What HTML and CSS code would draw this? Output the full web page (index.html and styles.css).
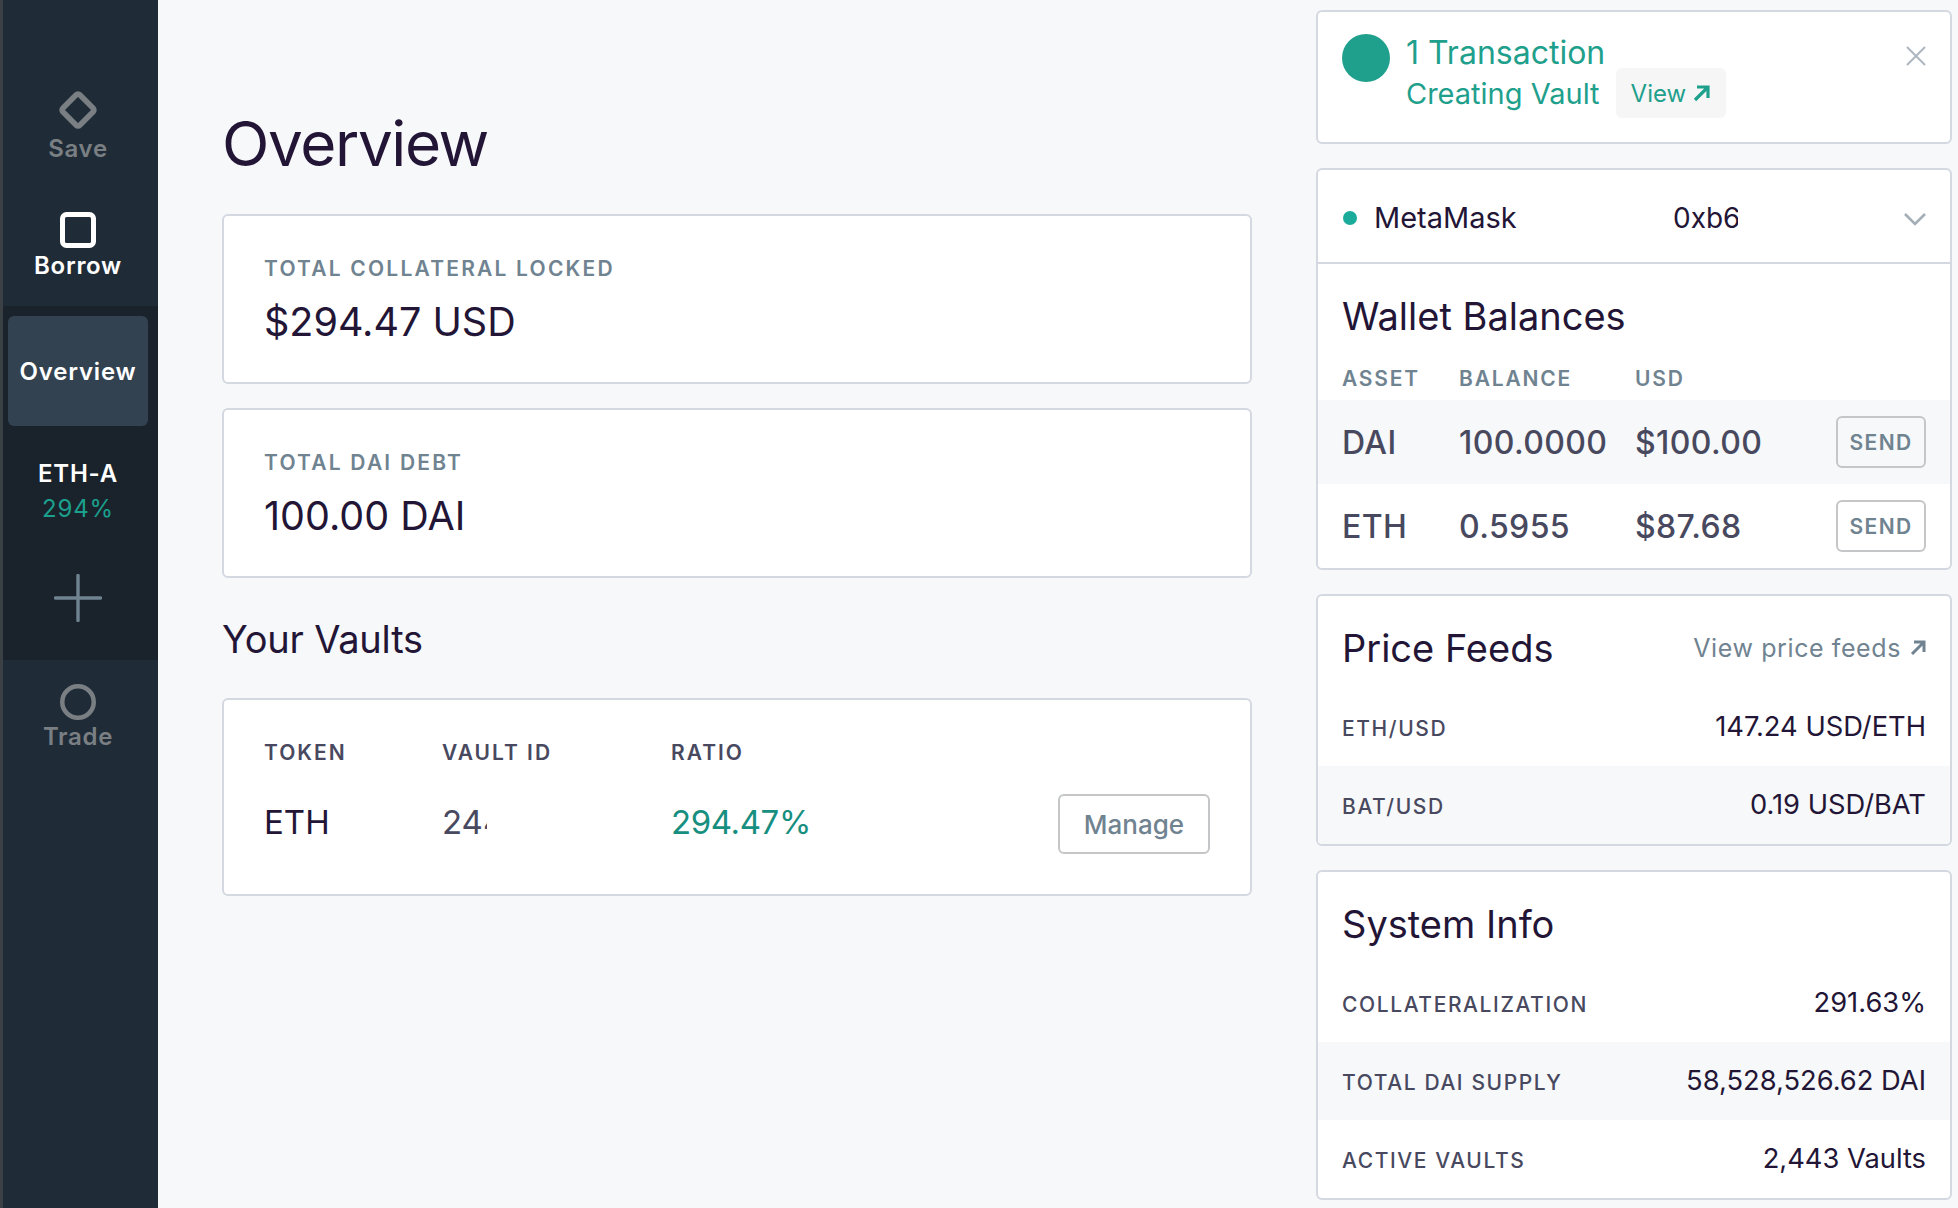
FILE: index.html
```html
<!DOCTYPE html>
<html lang="en">
<head>
  <meta charset="UTF-8">
  <title>Overview</title>
  <link rel="stylesheet" href="styles.css">
</head>
<body>
  <nav class="sidebar">
    <a class="nav-item nav-muted nav-save">
      <svg class="nav-icon" width="40" height="40" viewBox="0 0 40 40"><rect x="8" y="8" width="24" height="24" rx="2.5" transform="rotate(45 20 20)" fill="none" stroke="currentColor" stroke-width="5.5"/></svg>
      <span>Save</span>
    </a>
    <a class="nav-item nav-borrow">
      <svg class="nav-icon" width="36" height="36" viewBox="0 0 36 36"><rect x="2.5" y="2.5" width="31" height="31" rx="4" fill="none" stroke="currentColor" stroke-width="5"/></svg>
      <span>Borrow</span>
    </a>
    <div class="nav-group">
      <a class="nav-active">Overview</a>
      <a class="nav-vault">
        <span>ETH-A</span>
        <span class="nav-ratio">294%</span>
      </a>
      <svg class="nav-plus" width="48" height="48" viewBox="0 0 48 48"><path d="M24 1.5v45M1.5 24h45" fill="none" stroke="#708390" stroke-width="3.4" stroke-linecap="round"/></svg>
    </div>
    <a class="nav-item nav-muted nav-trade">
      <svg class="nav-icon" width="36" height="36" viewBox="0 0 36 36"><circle cx="18" cy="18" r="15.75" fill="none" stroke="currentColor" stroke-width="4.5"/></svg>
      <span>Trade</span>
    </a>
  </nav>

  <main class="content">
    <h1>Overview</h1>
    <section class="card stat-card">
      <div class="stat-label">TOTAL COLLATERAL LOCKED</div>
      <div class="stat-value">$294.47 USD</div>
    </section>
    <section class="card stat-card">
      <div class="stat-label">TOTAL DAI DEBT</div>
      <div class="stat-value">100.00 DAI</div>
    </section>
    <h2 class="vaults-title">Your Vaults</h2>
    <section class="card vault-card">
      <div class="vault-row vault-head">
        <span>TOKEN</span>
        <span>VAULT ID</span>
        <span>RATIO</span>
      </div>
      <div class="vault-row vault-data">
        <span class="vault-token">ETH</span>
        <span class="vault-id">2443</span>
        <span class="vault-ratio">294.47%</span>
        <button class="manage-btn">Manage</button>
      </div>
    </section>
  </main>

  <aside class="side">
    <section class="card tx-card">
      <span class="tx-circle"></span>
      <div class="tx-text">
        <div class="tx-count">1 Transaction</div>
        <div class="tx-status">
          <span>Creating Vault</span>
          <a class="tx-view">View
            <svg width="18" height="18" viewBox="0 0 18 18"><path d="M3 16L15 4M5 3h11v11" fill="none" stroke="currentColor" stroke-width="3.2"/></svg>
          </a>
        </div>
      </div>
      <svg class="tx-close" width="20" height="20" viewBox="0 0 20 20"><path d="M1 1l18 18M19 1L1 19" fill="none" stroke="#aeb7bf" stroke-width="2"/></svg>
    </section>

    <section class="card wallet-card">
      <div class="account">
        <span class="account-dot"></span>
        <span class="account-name">MetaMask</span>
        <span class="account-addr">0xb6f2c19e</span>
        <svg class="account-chevron" width="24" height="14" viewBox="0 0 24 14"><path d="M2 2l10 10L22 2" fill="none" stroke="#a3aeb7" stroke-width="2.6"/></svg>
      </div>
      <h3 class="card-title wallet-title">Wallet Balances</h3>
      <div class="bal-row bal-head">
        <span>ASSET</span>
        <span>BALANCE</span>
        <span>USD</span>
      </div>
      <div class="bal-row bal-data bal-shade">
        <span>DAI</span>
        <span>100.0000</span>
        <span>$100.00</span>
        <button class="send-btn">SEND</button>
      </div>
      <div class="bal-row bal-data">
        <span>ETH</span>
        <span>0.5955</span>
        <span>$87.68</span>
        <button class="send-btn">SEND</button>
      </div>
    </section>

    <section class="card feeds-card">
      <div class="card-head">
        <h3 class="card-title">Price Feeds</h3>
        <a class="feeds-link">View price feeds
          <svg width="16" height="16" viewBox="0 0 16 16"><path d="M2 14L13.5 2.5M4 2h10v10" fill="none" stroke="currentColor" stroke-width="3"/></svg>
        </a>
      </div>
      <div class="info-row">
        <span class="info-label">ETH/USD</span>
        <span class="info-value">147.24 USD/ETH</span>
      </div>
      <div class="info-row info-shade">
        <span class="info-label">BAT/USD</span>
        <span class="info-value">0.19 USD/BAT</span>
      </div>
    </section>

    <section class="card system-card">
      <div class="card-head">
        <h3 class="card-title">System Info</h3>
      </div>
      <div class="info-row">
        <span class="info-label">COLLATERALIZATION</span>
        <span class="info-value">291.63%</span>
      </div>
      <div class="info-row info-shade">
        <span class="info-label">TOTAL DAI SUPPLY</span>
        <span class="info-value">58,528,526.62 DAI</span>
      </div>
      <div class="info-row">
        <span class="info-label">ACTIVE VAULTS</span>
        <span class="info-value">2,443 Vaults</span>
      </div>
    </section>
  </aside>
</body>
</html>
```

FILE: styles.css
```css
* {
  box-sizing: border-box;
}
body {
  margin: 0;
  height: 1208px;
  overflow: hidden;
  display: flex;
  background: #f6f8f9;
  color: #231536;
  font-family: Inter, "Noto Sans", sans-serif;
}
h1, h2, h3 {
  margin: 0;
  font-weight: 400;
}

/* sidebar */
.sidebar {
  width: 158px;
  flex-shrink: 0;
  display: flex;
  flex-direction: column;
  padding-top: 88px;
  background: #1f2c38;
  box-shadow: inset 3px 0 0 #3b4045;
  color: #fff;
}
.nav-item {
  width: 156px;
  display: flex;
  flex-direction: column;
  align-items: center;
  font-size: 24px;
  font-weight: 600;
  letter-spacing: 0.7px;
  line-height: 28px;
}
.nav-muted {
  color: #7a7f83;
}
.nav-save {
  height: 120px;
}
.nav-save .nav-icon {
  margin-top: 2px;
  margin-bottom: 5px;
}
.nav-borrow {
  height: 98px;
}
.nav-borrow .nav-icon {
  margin-top: 4px;
  margin-bottom: 4px;
}
.nav-group {
  height: 354px;
  margin-left: 3px;
  padding: 10px 10px 0 5px;
  display: flex;
  flex-direction: column;
  align-items: center;
  background: #1a232c;
}
.nav-active {
  width: 140px;
  height: 110px;
  display: flex;
  align-items: center;
  justify-content: center;
  background: #334250;
  border-radius: 6px;
  font-size: 24px;
  font-weight: 600;
  letter-spacing: 0.8px;
}
.nav-vault {
  margin-top: 34px;
  display: flex;
  flex-direction: column;
  align-items: center;
  gap: 7px;
  font-size: 24px;
  font-weight: 600;
  letter-spacing: 0.8px;
  line-height: 28px;
}
.nav-ratio {
  color: #1aa08c;
  font-weight: 400;
}
.nav-plus {
  margin-top: 51px;
}
.nav-trade {
  padding-top: 24px;
}
.nav-trade .nav-icon {
  margin-bottom: 3px;
}

/* shared card */
.card {
  background: #fff;
  border: 2px solid #d4d9e1;
  border-radius: 6px;
  overflow: hidden;
}

/* main column */
.content {
  width: 1158px;
  flex-shrink: 0;
  padding: 108px 0 0 64px;
}
.content h1 {
  font-size: 62px;
  line-height: 72px;
  letter-spacing: -1.4px;
  margin-bottom: 34px;
}
.stat-card {
  width: 1030px;
  height: 170px;
  padding: 41px 40px 0;
  margin-bottom: 24px;
}
.stat-label {
  font-size: 21px;
  line-height: 24px;
  font-weight: 600;
  letter-spacing: 2.2px;
  color: #708390;
}
.stat-value {
  margin-top: 18px;
  font-size: 39.5px;
  line-height: 46px;
}
.vaults-title {
  font-size: 38px;
  line-height: 44px;
  letter-spacing: -0.2px;
  margin-top: 39px;
  margin-bottom: 37px;
}
.vault-card {
  width: 1030px;
  height: 198px;
  padding: 41px 40px 0;
}
.vault-row {
  display: grid;
  grid-template-columns: 178px 229px 1fr auto;
  align-items: center;
}
.vault-head {
  font-size: 21px;
  line-height: 24px;
  font-weight: 600;
  letter-spacing: 2px;
  color: #48495f;
}
.vault-data {
  margin-top: 29px;
  font-size: 33px;
}
.vault-data > span {
  padding-bottom: 4px;
}
.vault-id {
  width: 45px;
  overflow: hidden;
  color: #48495f;
}
.vault-ratio {
  letter-spacing: -0.4px;
  color: #178f80;
}
.manage-btn {
  width: 152px;
  height: 60px;
  background: #fff;
  border: 2px solid #c4c6c8;
  border-radius: 6px;
  color: #708390;
  font-family: inherit;
  font-size: 26px;
  font-weight: 500;
  padding: 0;
}

/* right column */
.side {
  width: 636px;
  flex-shrink: 0;
  padding-top: 10px;
}
.side .card {
  margin-bottom: 24px;
}
.tx-card {
  height: 134px;
  display: flex;
  padding: 22px 0 0 24px;
  position: relative;
}
.tx-circle {
  width: 48px;
  height: 48px;
  flex-shrink: 0;
  background: #1fa08c;
  border-radius: 50%;
}
.tx-text {
  margin-left: 16px;
  margin-top: -1px;
  color: #1fa08c;
}
.tx-count {
  font-size: 32px;
  line-height: 40px;
}
.tx-status {
  display: flex;
  align-items: center;
  gap: 16px;
  margin-top: -5px;
  font-size: 29px;
}
.tx-view {
  display: flex;
  align-items: center;
  gap: 6px;
  width: 110px;
  height: 50px;
  padding-left: 15px;
  background: #f6f6f6;
  border-radius: 6px;
  font-size: 24px;
}
.tx-close {
  position: absolute;
  top: 34px;
  right: 24px;
}
.wallet-card {
  height: 402px;
}
.account {
  height: 94px;
  display: flex;
  align-items: center;
  padding-left: 25px;
  padding-top: 3px;
  border-bottom: 2px solid #d4d9e1;
  font-size: 29px;
}
.account-dot {
  width: 14px;
  height: 14px;
  background: #1aab9b;
  border-radius: 50%;
  margin-right: 17px;
}
.account-name {
  width: 299px;
}
.account-addr {
  width: 65px;
  overflow: hidden;
  white-space: nowrap;
  font-size: 28px;
}
.account-chevron {
  margin-left: auto;
  margin-right: 23px;
  margin-top: 3px;
}
.card-title {
  font-size: 38px;
  line-height: 46px;
}
.wallet-title {
  padding: 29px 24px 0;
}
.bal-row {
  display: grid;
  grid-template-columns: 117px 176px 1fr auto;
  align-items: center;
  padding: 0 24px;
}
.bal-head {
  height: 44px;
  margin-top: 17px;
  font-size: 21px;
  font-weight: 600;
  letter-spacing: 1.8px;
  color: #708390;
}
.bal-data {
  height: 84px;
  font-size: 32px;
  font-weight: 500;
  letter-spacing: 0.4px;
  color: #48495f;
}
.bal-shade {
  background: #f6f8f9;
}
.send-btn {
  width: 90px;
  height: 52px;
  background: #fff;
  border: 2px solid #c4c6c8;
  border-radius: 6px;
  color: #708390;
  font-family: inherit;
  font-size: 21px;
  font-weight: 600;
  letter-spacing: 1.4px;
  padding: 0;
}
.bal-shade .send-btn {
  background: #f6f8f9;
}
.feeds-card {
  height: 252px;
}
.card-head {
  display: flex;
  align-items: flex-start;
  justify-content: space-between;
  height: 92px;
  padding: 29px 24px 0;
}
.feeds-link {
  display: flex;
  align-items: center;
  gap: 9px;
  height: 46px;
  font-size: 25px;
  letter-spacing: 0.6px;
  color: #708390;
}
.info-row {
  display: flex;
  align-items: center;
  justify-content: space-between;
  height: 78px;
  padding: 0 24px;
}
.info-shade {
  background: #f6f8f9;
}
.info-label {
  padding-top: 2px;
  font-size: 21px;
  font-weight: 500;
  letter-spacing: 1.6px;
  color: #48495f;
}
.info-value {
  padding-bottom: 2px;
  font-size: 27.3px;
}
.system-card {
  height: 330px;
}
```
